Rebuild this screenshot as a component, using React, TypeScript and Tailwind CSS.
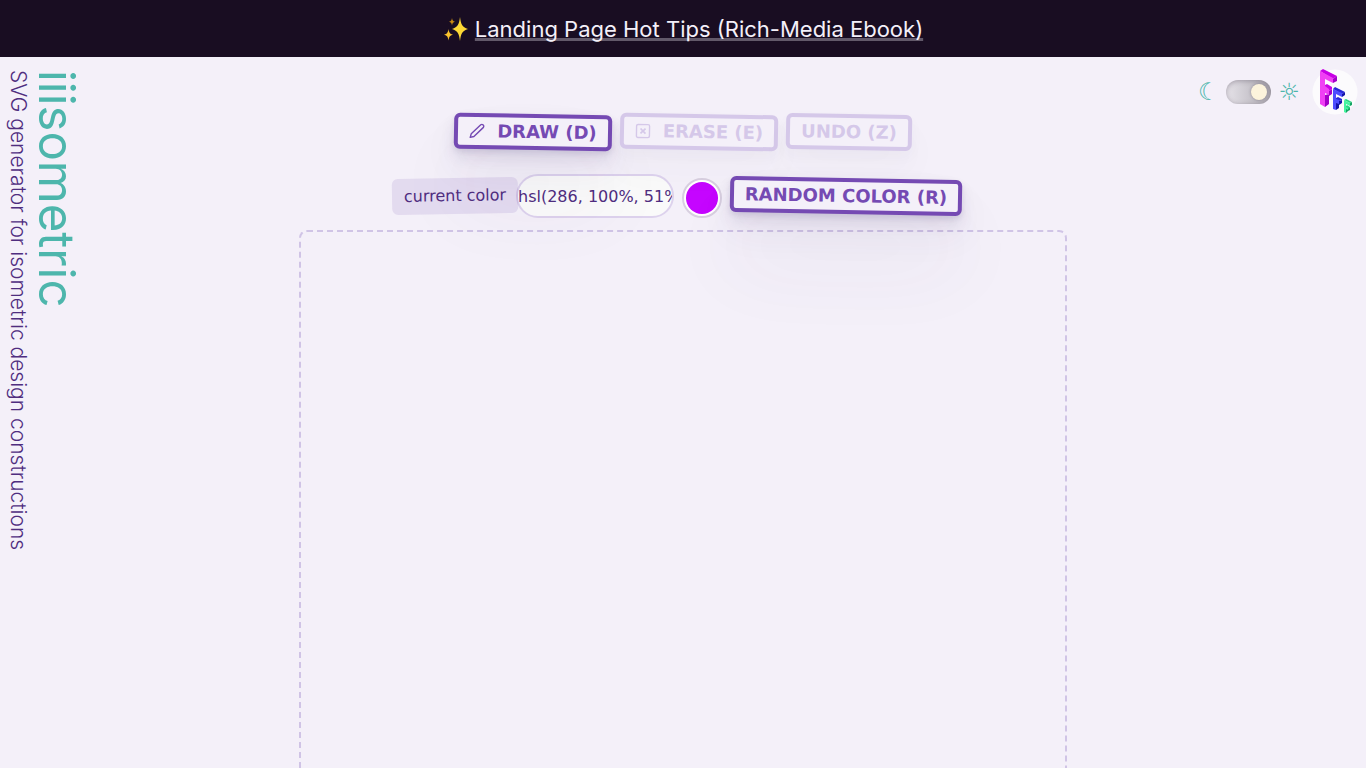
import { useState } from 'react'
import type { ReactNode } from 'react'

const TOOL_BASE = 'flex h-9 items-center justify-center rounded-md border-4 bg-[#f4f0f9] text-lg font-bold leading-6 whitespace-nowrap rotate-1'
const TOOL_ON = 'border-[#754ab3] text-[#754ab3] shadow-[0_3px_5px_rgba(70,50,110,0.10),0_8px_14px_rgba(70,50,110,0.10),0_20px_36px_rgba(70,50,110,0.06),0_50px_80px_rgba(70,50,110,0.07)]'
const TOOL_OFF = 'border-[#d5c8e9] text-[#d5c8e9] shadow-[0_6px_14px_rgba(70,50,110,0.03),0_20px_36px_rgba(70,50,110,0.03)]'

function ToolButton({ active, className, onClick, children }: { active: boolean; className: string; onClick: () => void; children: ReactNode }) {
  return (
    <button type="button" onClick={onClick} className={`${TOOL_BASE} ${active ? TOOL_ON : TOOL_OFF} ${className}`}>
      {children}
    </button>
  )
}

function PencilIcon() {
  return (
    <svg width="16" height="16" viewBox="0 0 16 16" fill="none" stroke="currentColor" strokeWidth="1.4" strokeLinejoin="round" aria-hidden="true">
      <path d="M1.300 14.500l1-3.700L11.400 1.800a1.900 1.900 0 0 1 2.700 0 1.900 1.900 0 0 1 0 2.700L5 13.500z" />
    </svg>
  )
}

function EraseIcon() {
  return (
    <svg width="16" height="16" viewBox="0 0 16 16" fill="none" stroke="currentColor" strokeWidth="1.4" aria-hidden="true">
      <rect x="1.500" y="1.500" width="13" height="13" rx="1.500" />
      <path strokeWidth="1.700" d="M5.500 5.500l5 5M10.500 5.500l-5 5" />
    </svg>
  )
}

function Sparkles() {
  return (
    <svg width="26" height="26" viewBox="0 0 26 26" aria-hidden="true">
      <path fill="#fdd835" d="M17 1c1 7.500 2 10 8 12-6 2-7 4.500-8 12-1-7.500-2-10-8-12 6-2 7-4.500 8-12z" />
      <path fill="#f9c22d" d="M5.500 13c.6 3.500 1.200 4.800 4.500 5.700-3.300.9-3.900 2.200-4.500 5.700-.6-3.500-1.200-4.800-4.500-5.700 3.300-.9 3.900-2.200 4.500-5.700z" />
      <path fill="#c98a12" d="M9 2c.4 2.400.9 3.200 3 3.800-2.100.6-2.600 1.400-3 3.700-.4-2.300-.9-3.100-3-3.700C8.100 5.200 8.600 4.400 9 2z" />
    </svg>
  )
}

function Logo() {
  return (
    <svg width="46" height="46" viewBox="0 0 46 46" aria-hidden="true">
      <circle cx="23" cy="23" r="22.500" fill="#fcfbfd" />
      <path fill="#c800e6" d="M8 2l3-2 14 7-4 3z" />
      <path fill="#a400c8" d="M21 10l4-3v5l-4 2zM17 22l3-2v5l-3 2zM13 26l4-1v10l-4 3z" />
      <path fill="#c800e6" d="M13 16l2-1 5 3v2l-3 2-4-3z" />
      <path fill="#f040f4" d="M8 2l13 7v5l-8-4v7l4 3v6l-4-2v14l-5-3z" />
      <path fill="#2828d8" d="M21 20l2-2 10 5-3 2z" />
      <path fill="#1212a8" d="M30 25l3-2v3l-3 2zM27 32l3-1v3l-3 2zM24 34l3-1v6l-3 2z" />
      <path fill="#2828d8" d="M24 29l2-1 4 2v1l-3 1-3-1z" />
      <path fill="#4d4dff" d="M21 20l9 4v4l-6-3v5l3 1v4l-3-1v7l-3-1z" />
      <path fill="#28d885" d="M32 31l2-1 6 3-2 1z" />
      <path fill="#12a562" d="M38 34l2-1v3l-2 1zM36 39l2-1v3l-2 1zM34 40l2-1v3l-2 2z" />
      <path fill="#28d885" d="M34 37l1-1 3 2v1l-2 1-2-1z" />
      <path fill="#45f5a0" d="M32 31l6 3v3l-4-2v3l2 1v2l-2-1v4l-2-1z" />
    </svg>
  )
}

export default function App() {
  const [tool, setTool] = useState('draw')
  const [color, setColor] = useState('hsl(286, 100%, 51%)')
  const [light, setLight] = useState(true)

  function randomColor() {
    setColor(`hsl(${Math.floor(Math.random() * 360)}, 100%, 51%)`)
  }

  return (
    <div className="min-h-screen bg-[#f4f0f9] font-['DejaVu_Sans',sans-serif] text-[#4f2d7f]">
      <div className="flex h-[57px] items-center justify-center gap-[6px] bg-[#190d22] font-[Inter,sans-serif] text-[22px] text-[#f4f0f9]">
        <Sparkles />
        <a href="#ebook" className="leading-7 underline decoration-[#62596a] decoration-[3px] underline-offset-1 [text-decoration-skip-ink:none]">Landing Page Hot Tips (Rich-Media Ebook)</a>
      </div>

      <div className="grid grid-cols-[1fr_minmax(0,768px)_1fr]">
        <header className="justify-self-start pt-[13px] pl-1 font-[Inter,sans-serif] [writing-mode:vertical-rl]">
          <h1 className="text-[49px] leading-[48px] text-[#4db6ac]">iiisometric</h1>
          <p className="text-[21px] font-light leading-7">SVG generator for isometric design constructions</p>
        </header>

        <main className="pt-[57px]">
          <div className="flex justify-center gap-2">
            <ToolButton active={tool === 'draw'} className="w-[158px] gap-3" onClick={() => setTool('draw')}>
              <PencilIcon />DRAW (D)
            </ToolButton>
            <ToolButton active={tool === 'erase'} className="w-[158px] gap-3" onClick={() => setTool('erase')}>
              <EraseIcon />ERASE (E)
            </ToolButton>
            <ToolButton active={false} className="w-[126px]" onClick={() => setTool('draw')}>UNDO (Z)</ToolButton>
          </div>

          <div className="mt-6 flex items-center justify-center pr-3">
            <label htmlFor="color" className="flex h-9 w-[126px] -rotate-1 items-center justify-center rounded-md bg-[#754ab3]/13 text-base">current color</label>
            <input id="color" value={color} onChange={e => setColor(e.target.value)} className="-ml-[2px] h-11 w-[158px] rounded-full border-2 border-[#ddd2ed] bg-[#fafafa] text-base outline-none" />
            <button type="button" aria-label="Pick color" className="mt-1 ml-2 size-10 rounded-full border-2 border-[#d8cfe0] bg-white p-[2px]">
              <span className="block size-8 rounded-full" style={{ background: color }} />
            </button>
            <ToolButton active className="ml-2 w-[232px]" onClick={randomColor}>RANDOM COLOR (R)</ToolButton>
          </div>

          <div className="mt-3 aspect-square w-full rounded-lg border-2 border-dashed border-[#d0c4e6]" />
        </main>

        <div className="flex h-[70px] items-center gap-[7px] justify-self-end pr-2 text-[#4db6ac]">
          <span className="text-2xl leading-6">☾</span>
          <label className="flex h-6 w-[45px] cursor-pointer items-center rounded-full bg-linear-to-r from-[#e6e3e9] to-[#b0acb4] px-1 shadow-[inset_0_1px_5px_rgba(60,50,70,0.35)]">
            <input type="checkbox" aria-label="Light theme" checked={light} onChange={e => setLight(e.target.checked)} className="peer sr-only" />
            <span className="size-4 rounded-full bg-[#fcf3dc] shadow-[0_0_3px_rgba(60,50,70,0.4)] peer-checked:ml-auto" />
          </label>
          <span className="text-2xl leading-6">☼</span>
          <a href="#home" aria-label="Home" className="ml-[5px]"><Logo /></a>
        </div>
      </div>
    </div>
  )
}
